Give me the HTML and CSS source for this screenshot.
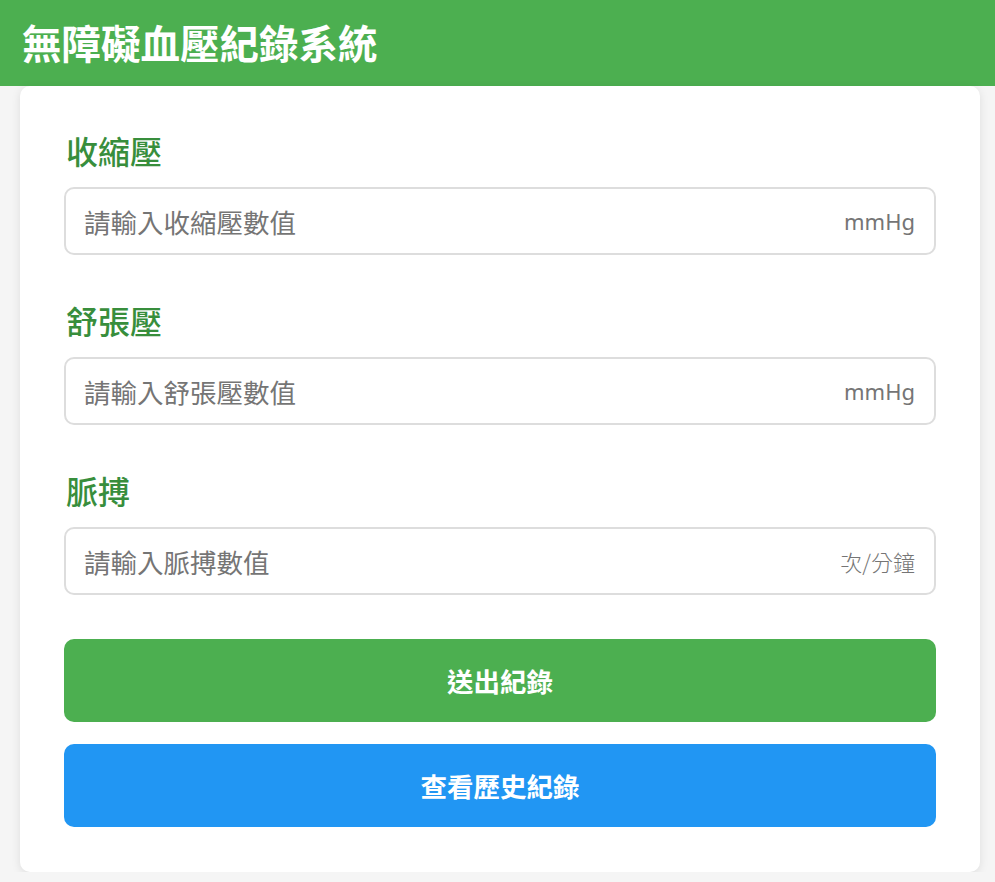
FILE: index.html
```html
<!DOCTYPE html>
<html lang="zh-Hant">
<head>
<meta charset="utf-8">
<title>無障礙血壓紀錄系統</title>
<link rel="stylesheet" href="styles.css">
</head>
<body>
<header class="header">
  <h1 class="title">無障礙血壓紀錄系統</h1>
</header>
<main class="card">
  <div class="group">
    <label class="label" for="sys">收縮壓</label>
    <div class="field">
      <input class="input" id="sys" type="text" placeholder="請輸入收縮壓數值">
      <span class="unit">mmHg</span>
    </div>
  </div>
  <div class="group">
    <label class="label" for="dia">舒張壓</label>
    <div class="field">
      <input class="input" id="dia" type="text" placeholder="請輸入舒張壓數值">
      <span class="unit">mmHg</span>
    </div>
  </div>
  <div class="group">
    <label class="label" for="pulse">脈搏</label>
    <div class="field">
      <input class="input" id="pulse" type="text" placeholder="請輸入脈搏數值">
      <span class="unit unit-cjk">次/分鐘</span>
    </div>
  </div>
  <div class="actions">
    <button class="btn btn-submit" type="button">送出紀錄</button>
    <button class="btn btn-history" type="button">查看歷史紀錄</button>
  </div>
</main>
</body>
</html>
```
FILE: styles.css
```css
* { box-sizing: border-box; }
html, body {
  margin: 0;
  padding: 0;
  background: #f5f5f5;
  font-family: "Noto Sans CJK TC", "Noto Sans", sans-serif;
}
.header {
  background: #4caf50;
  height: 86px;
  display: flex;
  align-items: center;
  padding: 0 22px 3px;
}
.title {
  margin: 0;
  color: #fff;
  font-size: 39.5px;
  font-weight: 700;
  line-height: 1;
}
.card {
  width: 960px;
  margin: 0 20px;
  background: #fff;
  border-radius: 10px;
  box-shadow: 0 2px 10px rgba(0,0,0,0.1);
  padding: 43px 44px 45px;
  display: flex;
  flex-direction: column;
}
.group {
  display: flex;
  flex-direction: column;
  gap: 16px;
  margin-bottom: 44px;
}
.label {
  font-size: 32px;
  line-height: 42px;
  font-weight: 500;
  color: #388e3c;
  padding-left: 2px;
}
.field {
  position: relative;
  height: 68px;
}
.input {
  width: 100%;
  height: 100%;
  border: 2px solid #ddd;
  border-radius: 10px;
  padding: 0 100px 0 18px;
  font-family: "Noto Sans CJK TC", sans-serif;
  font-size: 26.5px;
  color: #333;
  outline: none;
  background: #fff;
}
.input::placeholder { color: #757575; }
.unit {
  position: absolute;
  right: 21px;
  top: 50%;
  transform: translateY(-50%);
  font-family: "Noto Sans", "Noto Sans CJK TC", sans-serif;
  font-size: 22px;
  color: #757575;
}
.unit-cjk { font-family: "Noto Sans CJK TC", sans-serif; font-weight: 300; }
.actions {
  display: flex;
  flex-direction: column;
  gap: 22px;
}
.btn {
  height: 83px;
  border: none;
  border-radius: 10px;
  color: #fff;
  font-family: "Noto Sans CJK TC", sans-serif;
  font-size: 26.5px;
  font-weight: 700;
  cursor: pointer;
}
.btn-submit { background: #4caf50; }
.btn-history { background: #2196f3; }
```
